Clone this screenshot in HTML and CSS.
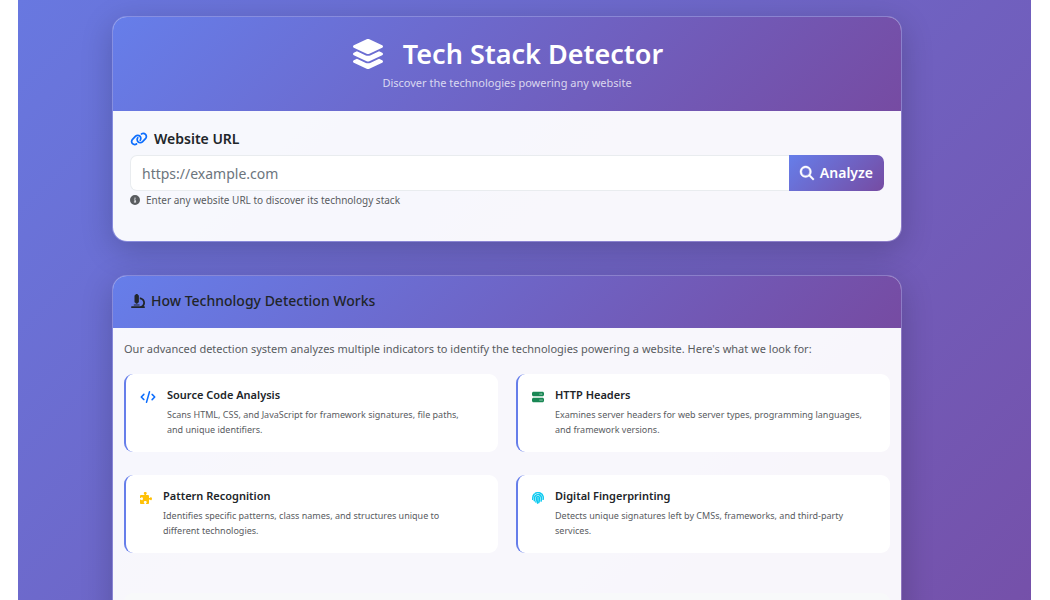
FILE: index.html
```html
<!DOCTYPE html>
<html lang="en">
<head>
<meta charset="utf-8">
<meta name="viewport" content="width=device-width, initial-scale=1">
<title>Tech Stack Detector</title>
<link rel="stylesheet" href="styles.css">
</head>
<body>
<main class="page">
  <section class="card">
    <header class="hero">
      <h1 class="hero-title">
        <svg class="hero-icon" viewBox="0 0 576 512" aria-hidden="true"><path d="M264.5 5.2c14.9-6.9 32.1-6.9 47 0l218.6 101c8.5 3.9 13.9 12.4 13.9 21.8s-5.4 17.9-13.9 21.8l-218.6 101c-14.9 6.9-32.1 6.9-47 0L45.9 149.8C37.4 145.8 32 137.3 32 128s5.4-17.9 13.9-21.8L264.5 5.2zM476.9 209.6l53.2 24.6c8.5 3.9 13.9 12.4 13.9 21.8s-5.4 17.9-13.9 21.8l-218.6 101c-14.9 6.9-32.1 6.9-47 0L45.9 277.8C37.4 273.8 32 265.3 32 256s5.4-17.9 13.9-21.8l53.2-24.6 152 70.2c23.4 10.8 50.4 10.8 73.8 0l152-70.2zm-152 198.2l152-70.2 53.2 24.6c8.5 3.9 13.9 12.4 13.9 21.8s-5.4 17.9-13.9 21.8l-218.6 101c-14.9 6.9-32.1 6.9-47 0L45.9 405.8C37.4 401.8 32 393.3 32 384s5.4-17.9 13.9-21.8l53.2-24.6 152 70.2c23.4 10.8 50.4 10.8 73.8 0z"/></svg>
        <span>Tech Stack Detector</span>
      </h1>
      <p class="hero-subtitle">Discover the technologies powering any website</p>
    </header>
    <form class="search">
      <label class="search-label" for="website-url">
        <svg class="link-icon" viewBox="0 0 640 512" aria-hidden="true"><path d="M579.8 267.7c56.5-56.5 56.5-148 0-204.5c-50-50-128.8-56.5-186.3-15.4l-1.6 1.1c-14.4 10.3-17.7 30.3-7.4 44.6s30.3 17.7 44.6 7.4l1.6-1.1c32.1-22.9 76-19.3 103.8 8.6c31.5 31.5 31.5 82.5 0 114L422.3 334.8c-31.5 31.5-82.5 31.5-114 0c-27.9-27.9-31.5-71.8-8.6-103.8l1.1-1.6c10.3-14.4 6.9-34.4-7.4-44.6s-34.4-6.9-44.6 7.4l-1.1 1.6C206.5 251.2 213 330 263 380c56.5 56.5 148 56.5 204.5 0L579.8 267.7zM60.2 244.3c-56.5 56.5-56.5 148 0 204.5c50 50 128.8 56.5 186.3 15.4l1.6-1.1c14.4-10.3 17.7-30.3 7.4-44.6s-30.3-17.7-44.6-7.4l-1.6 1.1c-32.1 22.9-76 19.3-103.8-8.6C74 372 74 321 105.5 289.5L217.7 177.2c31.5-31.5 82.5-31.5 114 0c27.9 27.9 31.5 71.8 8.6 103.9l-1.1 1.6c-10.3 14.4-6.9 34.4 7.4 44.6s34.4 6.9 44.6-7.4l1.1-1.6C433.5 260.8 427 182 377 132c-56.5-56.5-148-56.5-204.5 0L60.2 244.3z"/></svg>
        Website URL
      </label>
      <div class="search-row">
        <input class="search-input" id="website-url" type="url" placeholder="https://example.com" aria-describedby="url-hint">
        <button class="search-button" type="submit">
          <svg class="search-icon" viewBox="0 0 512 512" aria-hidden="true"><path d="M416 208c0 45.9-14.9 88.3-40 122.7L502.6 457.4c12.5 12.5 12.5 32.8 0 45.3s-32.8 12.5-45.3 0L330.7 376c-34.4 25.2-76.8 40-122.7 40C93.1 416 0 322.9 0 208S93.1 0 208 0S416 93.1 416 208zM208 352a144 144 0 1 0 0-288 144 144 0 1 0 0 288z"/></svg>
          Analyze
        </button>
      </div>
      <p class="hint" id="url-hint">
        <svg class="info-icon" viewBox="0 0 512 512" aria-hidden="true"><path d="M256 512A256 256 0 1 0 256 0a256 256 0 1 0 0 512zM216 336h24V272H216c-13.3 0-24-10.7-24-24s10.7-24 24-24h48c13.3 0 24 10.7 24 24v88h8c13.3 0 24 10.7 24 24s-10.7 24-24 24H216c-13.3 0-24-10.7-24-24s10.7-24 24-24zm40-208a32 32 0 1 1 0 64 32 32 0 1 1 0-64z"/></svg>
        Enter any website URL to discover its technology stack
      </p>
    </form>
  </section>

  <section class="card">
    <header class="section-header">
      <h2 class="section-title">
        <svg class="section-icon" viewBox="0 0 512 512" aria-hidden="true"><path d="M160 32c0-17.7 14.3-32 32-32h32c17.7 0 32 14.3 32 32c17.7 0 32 14.3 32 32V288c0 17.7-14.3 32-32 32c0 17.7-14.3 32-32 32H192c-17.7 0-32-14.3-32-32c-17.7 0-32-14.3-32-32V64c0-17.7 14.3-32 32-32zM32 448H320c70.7 0 128-57.3 128-128s-57.3-128-128-128V128c106 0 192 86 192 192c0 49.2-18.5 94-48.9 128H480c17.7 0 32 14.3 32 32s-14.3 32-32 32H320 32c-17.7 0-32-14.3-32-32s14.3-32 32-32zm80-64H304c8.8 0 16 7.2 16 16s-7.2 16-16 16H112c-8.8 0-16-7.2-16-16s7.2-16 16-16z"/></svg>
        How Technology Detection Works
      </h2>
    </header>
    <div class="section-body">
      <p class="intro">Our advanced detection system analyzes multiple indicators to identify the technologies powering a website. Here's what we look for:</p>
      <div class="features">
        <article class="feature">
          <svg class="feature-icon wide blue" viewBox="0 0 640 512" aria-hidden="true"><path d="M392.8 1.2c-17-4.9-34.7 5-39.6 22l-128 448c-4.9 17 5 34.7 22 39.6s34.7-5 39.6-22l128-448c4.9-17-5-34.7-22-39.6zm80.6 120.1c-12.5 12.5-12.5 32.8 0 45.3L562.7 256l-89.4 89.4c-12.5 12.5-12.5 32.8 0 45.3s32.8 12.5 45.3 0l112-112c12.5-12.5 12.5-32.8 0-45.3l-112-112c-12.5-12.5-32.8-12.5-45.3 0zm-306.7 0c-12.5-12.5-32.8-12.5-45.3 0l-112 112c-12.5 12.5-12.5 32.8 0 45.3l112 112c12.5 12.5 32.8 12.5 45.3 0s12.5-32.8 0-45.3L77.3 256l89.4-89.4c12.5-12.5 12.5-32.8 0-45.3z"/></svg>
          <div>
            <h3 class="feature-title">Source Code Analysis</h3>
            <p class="feature-text">Scans HTML, CSS, and JavaScript for framework signatures, file paths, and unique identifiers.</p>
          </div>
        </article>
        <article class="feature">
          <svg class="feature-icon green" viewBox="0 0 512 512" aria-hidden="true"><path d="M64 32C28.7 32 0 60.7 0 96v64c0 35.3 28.7 64 64 64H448c35.3 0 64-28.7 64-64V96c0-35.3-28.7-64-64-64H64zm280 72a24 24 0 1 1 0 48 24 24 0 1 1 0-48zm48 24a24 24 0 1 1 48 0 24 24 0 1 1 -48 0zM64 288c-35.3 0-64 28.7-64 64v64c0 35.3 28.7 64 64 64H448c35.3 0 64-28.7 64-64V352c0-35.3-28.7-64-64-64H64zm280 72a24 24 0 1 1 0 48 24 24 0 1 1 0-48zm56 24a24 24 0 1 1 48 0 24 24 0 1 1 -48 0z"/></svg>
          <div>
            <h3 class="feature-title">HTTP Headers</h3>
            <p class="feature-text">Examines server headers for web server types, programming languages, and framework versions.</p>
          </div>
        </article>
        <article class="feature">
          <svg class="feature-icon yellow" viewBox="0 0 512 512" aria-hidden="true"><path d="M192 104.8c0-9.2-5.8-17.3-13.2-22.8C167.2 73.3 160 61.3 160 48c0-26.5 28.7-48 64-48s64 21.5 64 48c0 13.3-7.2 25.3-18.8 34c-7.4 5.5-13.2 13.6-13.2 22.8v0c0 12.8 10.4 23.2 23.2 23.2H336c26.5 0 48 21.5 48 48v56.8c0 12.8 10.4 23.2 23.2 23.2v0c9.2 0 17.3-5.8 22.8-13.2c8.7-11.6 20.7-18.8 34-18.8c26.5 0 48 28.7 48 64s-21.5 64-48 64c-13.3 0-25.3-7.2-34-18.8c-5.5-7.4-13.6-13.2-22.8-13.2v0c-12.8 0-23.2 10.4-23.2 23.2V464c0 26.5-21.5 48-48 48H279.2c-12.8 0-23.2-10.4-23.2-23.2v0c0-9.2 5.8-17.3 13.2-22.8c11.6-8.7 18.8-20.7 18.8-34c0-26.5-28.7-48-64-48s-64 21.5-64 48c0 13.3 7.2 25.3 18.8 34c7.4 5.5 13.2 13.6 13.2 22.8v0c0 12.8-10.4 23.2-23.2 23.2H48c-26.5 0-48-21.5-48-48V343.2C0 330.4 10.4 320 23.2 320v0c9.2 0 17.3 5.8 22.8 13.2C54.7 344.8 66.7 352 80 352c26.5 0 48-28.7 48-64s-21.5-64-48-64c-13.3 0-25.3 7.2-34 18.8C40.5 250.2 32.4 256 23.2 256v0C10.4 256 0 245.6 0 232.8V176c0-26.5 21.5-48 48-48H168.8c12.8 0 23.2-10.4 23.2-23.2v0z"/></svg>
          <div>
            <h3 class="feature-title">Pattern Recognition</h3>
            <p class="feature-text">Identifies specific patterns, class names, and structures unique to different technologies.</p>
          </div>
        </article>
        <article class="feature">
          <svg class="feature-icon cyan" viewBox="0 0 512 512" aria-hidden="true"><g fill="none" stroke="currentColor" stroke-width="62" stroke-linecap="round"><path d="M28 310c8-30 6-40 6-70 2-60 28-112 66-150"/><path d="M146 54C270-6 440 36 474 190c8 36 8 80 2 124"/><path d="M96 370c14-42 14-76 14-120C116 80 390 50 402 250c2 60-4 110-16 140"/><path d="M166 430c20-60 24-110 24-176 2-84 130-84 132 0 2 80-10 150-34 200"/><path d="M256 256c0 80-8 140-22 220"/></g></svg>
          <div>
            <h3 class="feature-title">Digital Fingerprinting</h3>
            <p class="feature-text">Detects unique signatures left by CMSs, frameworks, and third-party services.</p>
          </div>
        </article>
      </div>
      <div class="note"></div>
    </div>
  </section>
</main>
</body>
</html>
```
FILE: styles.css
```css
* {
  box-sizing: border-box;
}

body {
  margin: 0;
  background: #fff;
  color: #212529;
  font-family: "Noto Sans", "Open Sans", sans-serif;
  font-size: 14px;
  line-height: 20px;
}

h1, h2, h3, p {
  margin: 0;
}

svg {
  flex: none;
  fill: currentColor;
}

.page {
  display: flex;
  flex-direction: column;
  gap: 33px;
  min-height: 100vh;
  margin: 0 19px 0 18px;
  padding: 16px 129px 32px 94px;
  background: linear-gradient(135deg, #6878e0, #764ea6);
}

.card {
  overflow: hidden;
  border: 1px solid rgba(255, 255, 255, 0.2);
  border-radius: 15px;
  background: rgba(255, 255, 255, 0.95);
  background-clip: padding-box;
  box-shadow: 0 8px 32px rgba(0, 0, 0, 0.2);
}

.hero {
  padding: 17px 24px 19px;
  background: linear-gradient(135deg, #667eea, #764ba2);
  color: #fff;
  text-align: center;
}

.hero-title {
  display: flex;
  align-items: center;
  justify-content: center;
  gap: 18px;
  font-size: 27px;
  font-weight: 600;
  line-height: 40px;
}

.hero-icon {
  width: 34px;
  height: 30px;
}

.hero-subtitle {
  color: rgba(255, 255, 255, 0.75);
  font-size: 11px;
  line-height: 18px;
}

.search {
  padding: 18px 17px 32px;
}

.search-label {
  display: flex;
  align-items: center;
  gap: 6px;
  margin-bottom: 6px;
  font-weight: 600;
}

.link-icon {
  width: 18px;
  height: 14px;
  color: #0d6efd;
}

.search-row {
  display: flex;
}

.search-input {
  flex: 1;
  min-width: 0;
  height: 36px;
  padding: 0 11px;
  border: 1px solid #e9ecef;
  border-right: 0;
  border-radius: 7px 0 0 7px;
  background: #fff;
  color: #212529;
  font: inherit;
}

.search-input::placeholder {
  color: #6c757d;
}

.search-button {
  display: flex;
  align-items: center;
  gap: 6px;
  padding: 0 11px;
  border: 0;
  border-radius: 0 7px 7px 0;
  background: linear-gradient(135deg, #667eea, #764ba2);
  color: #fff;
  font: inherit;
  font-weight: 600;
}

.search-icon {
  width: 14px;
  height: 14px;
  stroke: currentColor;
  stroke-width: 16px;
  overflow: visible;
}

.hint {
  display: flex;
  align-items: center;
  gap: 6px;
  color: #595c5f;
  font-size: 10px;
  line-height: 18px;
}

.info-icon {
  width: 10px;
  height: 10px;
}

.section-header {
  padding: 15px 18px 17px;
  background: linear-gradient(135deg, #667eea, #764ba2);
}

.section-title {
  display: flex;
  align-items: center;
  gap: 6px;
  font-size: 14px;
  font-weight: 500;
  line-height: 20px;
}

.section-icon {
  width: 14px;
  height: 14px;
}

.section-body {
  padding: 11px;
}

.intro {
  margin-bottom: 15px;
  color: #595c5f;
  font-size: 11px;
}

.features {
  display: grid;
  grid-template-columns: 1fr 1fr;
  gap: 23px 18px;
  margin-bottom: 40px;
}

.feature {
  display: flex;
  gap: 11px;
  min-height: 78px;
  padding: 11px 26px 11px 14px;
  border-left: 2px solid #667eea;
  border-radius: 9px;
  background: #fff;
}

.feature-icon {
  width: 12px;
  height: 12px;
  margin-top: 6px;
}

.feature-icon.wide {
  width: 16px;
}

.blue { color: #0d6efd; }
.green { color: #198754; }
.yellow { color: #ffc107; }
.cyan { color: #0dcaf0; }

.feature-title {
  margin-bottom: 2px;
  font-size: 11px;
  font-weight: 600;
  line-height: 20px;
}

.feature-text {
  color: #595c5f;
  font-size: 9px;
  line-height: 15px;
}

.note {
  min-height: 64px;
  border-radius: 9px;
  background: #f8f9fa;
}
```
